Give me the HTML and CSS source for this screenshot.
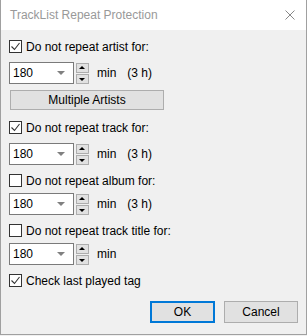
FILE: index.html
```html
<!DOCTYPE html>
<html lang="en">
<head>
    <meta charset="UTF-8">
    <title>TrackList Repeat Protection</title>
    <link rel="stylesheet" href="styles.css">
</head>
<body>
    <div class="window">
        <div class="titlebar">
            <span class="title">TrackList Repeat Protection</span>
            <svg class="close" width="10" height="10" viewBox="0 0 10 10">
                <path d="M0.5 0.5 L9.5 9.5 M9.5 0.5 L0.5 9.5" stroke="#888" stroke-width="1"/>
            </svg>
        </div>
        <div class="content">
            <label class="check-row artist">
                <span class="box"><svg viewBox="0 0 11 11"><path d="M1.5 5.5 L4.5 8.5 L9.5 2" fill="none" stroke="#333" stroke-width="1.1"/></svg></span>
                <span>Do not repeat artist for:</span>
            </label>
            <div class="value-row wide-gap">
                <div class="combo"><span>180</span><i class="arrow"></i></div>
                <div class="spin"><b class="up"></b><b class="down"></b></div>
                <span class="unit">min</span>
                <span class="hours">(3 h)</span>
            </div>
            <button class="btn wide">Multiple Artists</button>

            <label class="check-row track">
                <span class="box"><svg viewBox="0 0 11 11"><path d="M1.5 5.5 L4.5 8.5 L9.5 2" fill="none" stroke="#333" stroke-width="1.1"/></svg></span>
                <span>Do not repeat track for:</span>
            </label>
            <div class="value-row wide-gap">
                <div class="combo"><span>180</span><i class="arrow"></i></div>
                <div class="spin"><b class="up"></b><b class="down"></b></div>
                <span class="unit">min</span>
                <span class="hours">(3 h)</span>
            </div>

            <label class="check-row">
                <span class="box"></span>
                <span>Do not repeat album for:</span>
            </label>
            <div class="value-row">
                <div class="combo"><span>180</span><i class="arrow"></i></div>
                <div class="spin"><b class="up"></b><b class="down"></b></div>
                <span class="unit">min</span>
                <span class="hours">(3 h)</span>
            </div>

            <label class="check-row">
                <span class="box"></span>
                <span>Do not repeat track title for:</span>
            </label>
            <div class="value-row">
                <div class="combo"><span>180</span><i class="arrow"></i></div>
                <div class="spin"><b class="up"></b><b class="down"></b></div>
                <span class="unit">min</span>
            </div>

            <label class="check-row">
                <span class="box"><svg viewBox="0 0 11 11"><path d="M1.5 5.5 L4.5 8.5 L9.5 2" fill="none" stroke="#333" stroke-width="1.1"/></svg></span>
                <span>Check last played tag</span>
            </label>

            <div class="actions">
                <button class="btn ok">OK</button>
                <button class="btn">Cancel</button>
            </div>
        </div>
    </div>
</body>
</html>
```

FILE: styles.css
```css
* {
    margin: 0;
    padding: 0;
    box-sizing: border-box;
    font-family: 'Liberation Sans', Arial, sans-serif;
}
body {
    width: 307px;
    height: 336px;
    background: #f0f0f0;
    overflow: hidden;
}
.window {
    width: 307px;
    height: 335px;
    border: 1px solid #a0a0a0;
    border-top: none;
    background: #f0f0f0;
    display: flex;
    flex-direction: column;
}
.titlebar {
    height: 30px;
    background: white;
    display: flex;
    align-items: center;
    justify-content: space-between;
    padding: 0 11px 0 9px;
}
.title {
    color: #999;
    font-size: 12px;
}
.content {
    display: flex;
    flex-direction: column;
    padding: 0 0 0 8px;
    font-size: 12px;
    color: #000;
}
.check-row {
    display: flex;
    align-items: center;
    gap: 4px;
    height: 13px;
    margin-top: 9px;
}
.check-row.artist {
    margin-top: 10px;
}
.check-row.track {
    margin-top: 11px;
}
.box {
    width: 13px;
    height: 13px;
    border: 1px solid #333;
    background: white;
    display: flex;
}
.box svg {
    width: 11px;
    height: 11px;
}
.value-row {
    display: flex;
    align-items: center;
    margin-top: 6px;
    height: 22px;
}
.value-row.wide-gap {
    margin-top: 9px;
}
.combo {
    width: 65px;
    height: 22px;
    background: white;
    border: 1px solid #7a7a7a;
    display: flex;
    align-items: center;
    justify-content: space-between;
    padding: 0 8px 0 3px;
}
.arrow {
    width: 0;
    height: 0;
    border-left: 4px solid transparent;
    border-right: 4px solid transparent;
    border-top: 4px solid #808080;
}
.spin {
    display: flex;
    flex-direction: column;
    gap: 1px;
    margin-left: 2px;
    width: 13px;
}
.spin b {
    height: 10px;
    background: #e1e1e1;
    border: 1px solid #adadad;
    position: relative;
}
.spin b::after {
    content: "";
    position: absolute;
    left: 2px;
    top: 2px;
    border-left: 3px solid transparent;
    border-right: 3px solid transparent;
}
.spin .up::after {
    border-bottom: 3px solid #000;
}
.spin .down::after {
    border-top: 3px solid #000;
    top: 3px;
}
.unit {
    margin-left: 8px;
}
.hours {
    margin-left: 11px;
}
.btn {
    background: #e1e1e1;
    border: 1px solid #adadad;
    font-size: 12px;
    color: #000;
    height: 20px;
}
.btn.wide {
    width: 154px;
    margin: 6px 0 0 1px;
}
.actions {
    display: flex;
    justify-content: flex-end;
    gap: 9px;
    margin-top: 14px;
    padding-right: 8px;
}
.actions .btn {
    width: 74px;
    height: 22px;
}
.btn.ok {
    width: 65px;
    border: 2px solid #0078d7;
}
```
